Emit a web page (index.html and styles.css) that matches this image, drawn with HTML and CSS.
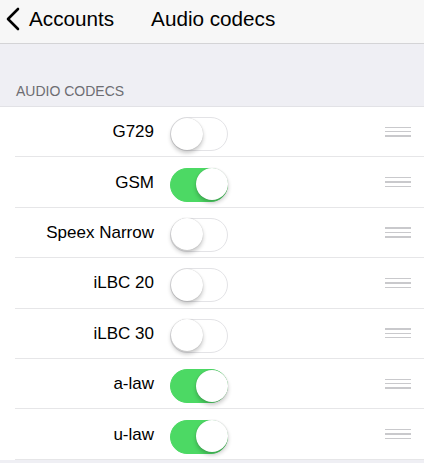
FILE: index.html
```html
<!DOCTYPE html>
<html lang="en">
<head>
<meta charset="utf-8">
<title>Audio codecs</title>
<link rel="stylesheet" href="styles.css">
</head>
<body>
<header class="nav">
  <svg class="chev" width="14" height="24" viewBox="0 0 14 24"><polyline points="12,2 2,12 12,22" fill="none" stroke="#000" stroke-width="2.6" stroke-linecap="round" stroke-linejoin="round"/></svg>
  <span class="back">Accounts</span>
  <span class="title">Audio codecs</span>
</header>
<div class="section-head">AUDIO CODECS</div>
<ul class="list">
  <li class="row"><span class="label">G729</span><span class="toggle"><span class="knob"></span></span><span class="handle"><i></i><i></i><i></i></span></li>
  <li class="row"><span class="label">GSM</span><span class="toggle on"><span class="knob"></span></span><span class="handle"><i></i><i></i><i></i></span></li>
  <li class="row"><span class="label">Speex Narrow</span><span class="toggle"><span class="knob"></span></span><span class="handle"><i></i><i></i><i></i></span></li>
  <li class="row"><span class="label">iLBC 20</span><span class="toggle"><span class="knob"></span></span><span class="handle"><i></i><i></i><i></i></span></li>
  <li class="row"><span class="label">iLBC 30</span><span class="toggle"><span class="knob"></span></span><span class="handle"><i></i><i></i><i></i></span></li>
  <li class="row"><span class="label">a-law</span><span class="toggle on"><span class="knob"></span></span><span class="handle"><i></i><i></i><i></i></span></li>
  <li class="row"><span class="label">u-law</span><span class="toggle on"><span class="knob"></span></span><span class="handle"><i></i><i></i><i></i></span></li>
</ul>
</body>
</html>
```
FILE: styles.css
```css
html, body {
  margin: 0;
  padding: 0;
  background: #efeff4;
  font-family: "Liberation Sans", Arial, sans-serif;
  color: #000;
}
.nav {
  display: flex;
  align-items: center;
  height: 43px;
  box-sizing: content-box;
  padding: 0 0 0 6px;
  background: #f7f7f7;
  border-bottom: 1px solid #d4d4d6;
  font-size: 20.7px;
  line-height: 24px;
}
.chev {
  display: block;
  margin-top: -6px;
}
.back {
  margin-left: 9px;
  margin-top: -5px;
}
.title {
  margin-left: 37px;
  margin-top: -5px;
}
.section-head {
  height: 17px;
  padding: 39px 0 6px 16px;
  font-size: 14px;
  line-height: 17px;
  color: #6d6d72;
}
.list {
  list-style: none;
  margin: 0;
  padding: 0 0 0 15px;
  background: #fff;
  border-top: 1px solid #e2e2e6;
}
.row {
  display: flex;
  align-items: center;
  height: 50.4px;
  box-sizing: border-box;
  border-bottom: 1px solid #e6e6e8;
}
.label {
  width: 139px;
  text-align: right;
  font-size: 17px;
  line-height: 20px;
  margin-top: 1px;
}
.toggle {
  position: relative;
  margin-left: 16px;
  margin-top: 5px;
  width: 58px;
  height: 34px;
  box-sizing: border-box;
  border-radius: 17px;
  border: 1.5px solid #e3e3e6;
  background: #fff;
}
.toggle.on {
  background: #4cd964;
  border-color: #4cd964;
}
.knob {
  position: absolute;
  top: -0.5px;
  left: -0.5px;
  width: 32px;
  height: 32px;
  border-radius: 50%;
  background: #fff;
  box-shadow: 0 3px 4px rgba(0,0,0,0.22), 0 0 1px rgba(0,0,0,0.25);
}
.toggle.on .knob {
  left: auto;
  right: -0.5px;
}
.handle {
  margin-left: auto;
  margin-right: 13px;
  width: 26px;
  display: flex;
  flex-direction: column;
  gap: 3px;
}
.handle i {
  display: block;
  height: 1.4px;
  background: #c9c9cc;
}
```
